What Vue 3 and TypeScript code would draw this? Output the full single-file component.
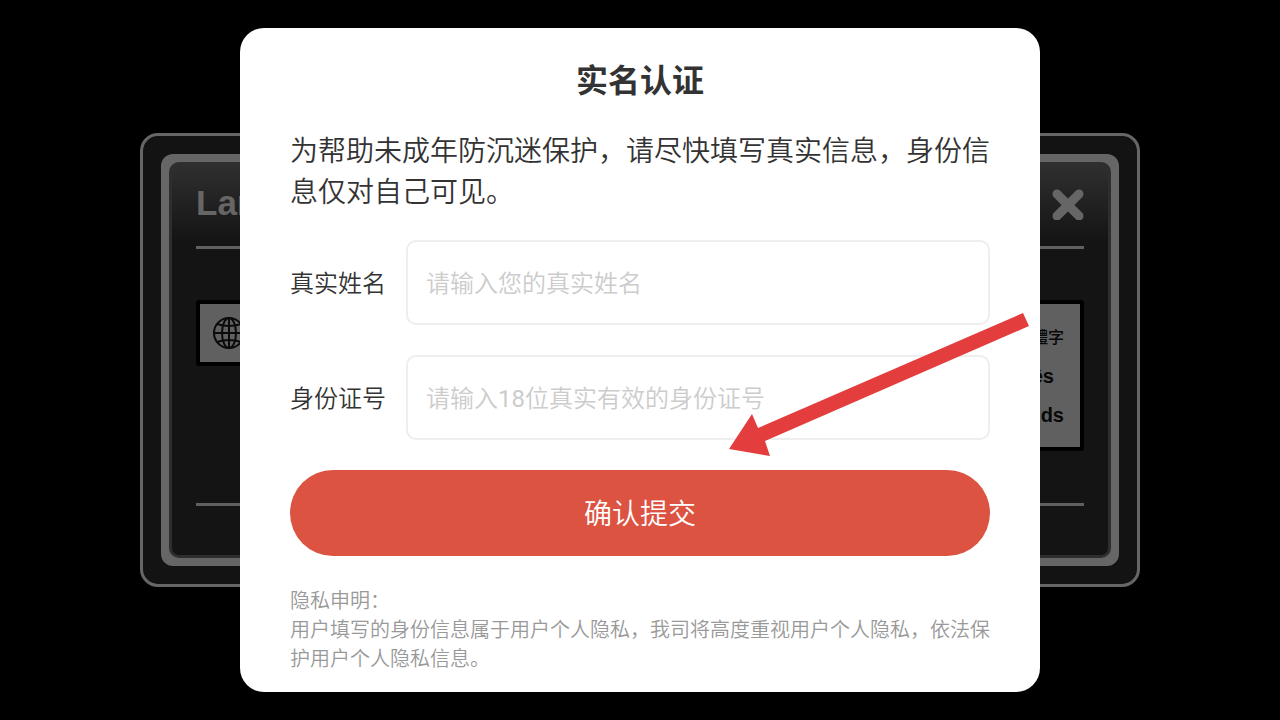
<script setup lang="ts">
import { ref } from 'vue'

const realName = ref('')
const idNumber = ref('')
const languages: string[] = ['繁體字', 'Português', 'Nederlands']
</script>

<template>
  <main class="stage">
    <section class="panel">
      <div class="frame">
        <div class="inner">
          <header class="panel-head">
            <h2 class="panel-title">Lan</h2>
            <button class="close" type="button" aria-label="Close">
              <svg viewBox="0 0 32 32" width="32" height="32">
                <path d="M5 6 L27 28 M27 6 L5 28" stroke="#666" stroke-width="9" stroke-linecap="round" />
              </svg>
            </button>
          </header>
          <div class="cards">
            <div class="card current">
              <svg viewBox="0 0 32 32" width="32" height="32" fill="none" stroke="#0a0a0a" stroke-width="2">
                <circle cx="16" cy="16" r="15" />
                <ellipse cx="16" cy="16" rx="7" ry="15" />
                <path d="M16 1 V31 M1 16 H31 M4 7 Q16 11 28 7 M4 25 Q16 21 28 25" />
              </svg>
            </div>
            <ul class="card list">
              <li v-for="name in languages" :key="name">{{ name }}</li>
            </ul>
          </div>
        </div>
      </div>
    </section>

    <form class="dialog" @submit.prevent>
      <h1 class="title">实名认证</h1>
      <p class="intro">为帮助未成年防沉迷保护，请尽快填写真实信息，身份信息仅对自己可见。</p>
      <div class="row">
        <label for="real-name">真实姓名</label>
        <input id="real-name" v-model="realName" type="text" placeholder="请输入您的真实姓名" />
      </div>
      <div class="row">
        <label for="id-number">身份证号</label>
        <input id="id-number" v-model="idNumber" type="text" placeholder="请输入18位真实有效的身份证号" />
      </div>
      <button class="submit" type="submit">确认提交</button>
      <div class="privacy">
        <p>隐私申明：</p>
        <p>用户填写的身份信息属于用户个人隐私，我司将高度重视用户个人隐私，依法保护用户个人隐私信息。</p>
      </div>
      <svg class="arrow" viewBox="0 0 300 144" width="300" height="144" aria-hidden="true">
        <path d="M0 137 L23 102 L29 116 L294 1 L300 14 L36 129 L41 144 Z" fill="#e33d3d" />
      </svg>
    </form>
  </main>
</template>

<style>
body {
  margin: 0;
  background: #000;
}
</style>

<style scoped>
* {
  box-sizing: border-box;
}

h1,
h2,
p,
ul {
  margin: 0;
  padding: 0;
}

.stage {
  display: grid;
  place-items: center;
  min-height: 100vh;
  background: #000;
  overflow: hidden;
}

.panel,
.dialog {
  grid-area: 1 / 1;
}

.panel {
  width: 100%;
  max-width: 1000px;
  padding: 18px;
  border: 3px solid #666;
  border-radius: 18px;
  background: #131313;
  font-family: "Liberation Sans", "Noto Sans CJK TC", sans-serif;
}

.frame {
  border: 8px solid #666;
  border-radius: 12px;
  background: #666;
}

.inner {
  min-height: 396px;
  padding: 0 24px 49px;
  border: 3px solid #2e2e2e;
  border-top-width: 0;
  border-radius: 10px;
  background: linear-gradient(#303030, #141414 80px);
  display: flex;
  flex-direction: column;
}

.panel-head {
  display: flex;
  align-items: center;
  justify-content: space-between;
  height: 87px;
  border-bottom: 3px solid #606060;
}

.panel-title {
  padding-bottom: 2px;
  color: #666;
  font-size: 35px;
  line-height: 40px;
}

.close {
  display: flex;
  padding: 0;
  border: 0;
  background: none;
}

.cards {
  display: flex;
  flex: 1;
  align-items: flex-start;
  justify-content: space-between;
  padding-top: 51px;
  border-bottom: 3px solid #606060;
}

.card {
  border: 4px solid #000;
  border-radius: 3px;
  background: #606060;
}

.current {
  width: 360px;
  height: 66px;
  padding: 13px;
}

.list {
  display: grid;
  justify-content: end;
  align-content: center;
  width: 360px;
  height: 151px;
  padding: 2px 16px 0;
  list-style: none;
  color: #080808;
  font-size: 20px;
  font-weight: 700;
  line-height: 39px;
}

.list li:first-child {
  font-size: 16px;
  font-weight: 500;
  text-align: right;
}

.dialog {
  position: relative;
  width: 100%;
  max-width: 800px;
  padding: 29px 50px 18px;
  border-radius: 24px;
  background: #fff;
  color: #333;
  font-family: Roboto, "Noto Sans CJK SC", sans-serif;
  font-weight: 350;
}

.title {
  margin-bottom: 26px;
  font-size: 32px;
  font-weight: 600;
  line-height: 48px;
  text-align: center;
}

.intro {
  margin-bottom: 27px;
  font-size: 28px;
  line-height: 41px;
}

.row {
  display: flex;
  align-items: center;
  gap: 20px;
  margin-bottom: 30px;
  font-size: 24px;
}

.row label {
  padding-bottom: 2px;
}

.row input {
  flex: 1;
  min-width: 0;
  height: 85px;
  padding: 2px 18px 0;
  border: 2px solid #eee;
  border-radius: 10px;
  outline: none;
  background: #fff;
  color: #333;
  font-family: Roboto, "Noto Sans CJK SC DemiLight", "Noto Sans CJK SC", sans-serif;
  font-size: 24px;
  font-weight: 400;
}

.row input::placeholder {
  color: #ccc;
}

.submit {
  width: 100%;
  height: 86px;
  margin-bottom: 31px;
  padding: 0 0 2px;
  border: 0;
  border-radius: 43px;
  background: #dc5342;
  color: #fff;
  font-family: inherit;
  font-size: 28px;
  font-weight: inherit;
}

.privacy {
  color: #999;
  font-size: 20px;
  line-height: 29px;
}

.arrow {
  position: absolute;
  top: 284px;
  left: 489px;
}
</style>
